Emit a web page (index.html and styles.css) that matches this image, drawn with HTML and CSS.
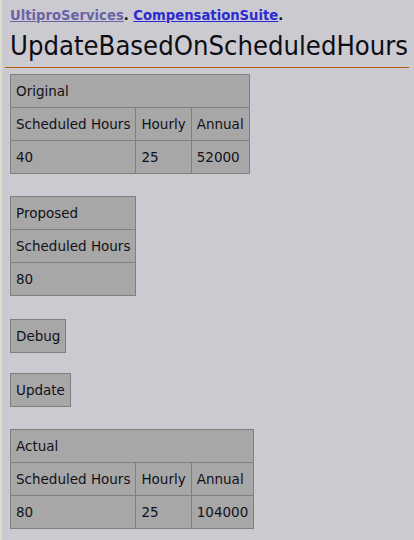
FILE: index.html
```html
<!DOCTYPE html>
<html lang="en">
<head>
<meta charset="utf-8">
<title>UpdateBasedOnScheduledHours</title>
<link rel="stylesheet" href="styles.css">
</head>
<body>
<div class="page">
  <header class="header">
    <div class="crumbs"><a class="link visited" href="#">UltiproServices</a>. <a class="link" href="#">CompensationSuite</a>.</div>
    <h1 class="title">UpdateBasedOnScheduledHours</h1>
  </header>
  <main class="content">
    <table class="grid">
      <tr><td colspan="3">Original</td></tr>
      <tr><td>Scheduled Hours</td><td>Hourly</td><td>Annual</td></tr>
      <tr><td>40</td><td>25</td><td>52000</td></tr>
    </table>
    <table class="grid">
      <tr><td>Proposed</td></tr>
      <tr><td>Scheduled Hours</td></tr>
      <tr><td>80</td></tr>
    </table>
    <table class="grid debug">
      <tr><td>Debug</td></tr>
    </table>
    <table class="grid update">
      <tr><td>Update</td></tr>
    </table>
    <table class="grid">
      <tr><td colspan="3">Actual</td></tr>
      <tr><td>Scheduled Hours</td><td>Hourly</td><td>Annual</td></tr>
      <tr><td>80</td><td>25</td><td>104000</td></tr>
    </table>
  </main>
</div>
</body>
</html>
```
FILE: styles.css
```css
html {
  background: #cbcad0;
}
body {
  margin: 0;
  background: linear-gradient(to right, #dcdccb 0, #dcdccb 2px, #cbcad0 2px);
  min-height: 540px;
  font-family: "DejaVu Sans", Verdana, sans-serif;
  color: #111118;
}
.page {
  padding: 0 5px;
}
.header {
  padding: 7px 0 5px 5px;
  border-bottom: 1px solid #b45f06;
}
.crumbs {
  font-size: 13.2px;
  line-height: 18px;
  font-weight: bold;
  color: #111;
}
.link {
  color: #2b2bd0;
  text-decoration: underline;
}
.link.visited {
  color: #6a64a6;
}
.title {
  margin: 5px 0 0;
  font-family: "DejaVu Sans Condensed", "DejaVu Sans", sans-serif;
  font-stretch: condensed;
  font-weight: normal;
  font-size: 27.2px;
  line-height: 32px;
  color: #0d0d14;
}
.content {
  padding: 6px 5px 0;
  display: flex;
  flex-direction: column;
  align-items: flex-start;
  gap: 22px;
}
.grid {
  border-collapse: collapse;
  background: #a7a7a7;
  font-size: 13.5px;
  line-height: 18px;
}
.grid.debug {
  margin-top: 1px;
}
.grid.update {
  margin-top: -2px;
}
.grid td {
  border: 1px solid #7f7f7f;
  padding: 7px 5px;
  white-space: nowrap;
}
```
